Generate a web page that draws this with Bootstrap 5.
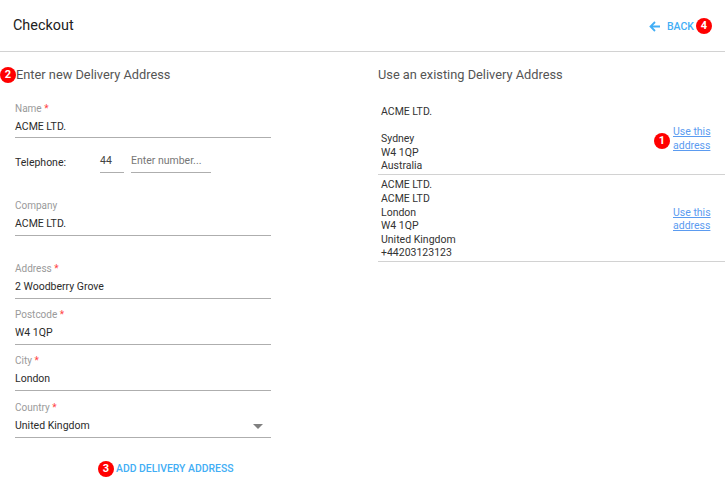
<!DOCTYPE html>
<html lang="en">
<head>
<meta charset="utf-8">
<title>Checkout</title>
<link href="https://cdn.jsdelivr.net/npm/bootstrap@5.3.0/dist/css/bootstrap.min.css" rel="stylesheet">
<style>
html,body{height:490px;overflow:hidden;background:#fff}
body{font-family:Roboto,"Liberation Sans",sans-serif;font-size:10.5px;color:#2b2b2b}
.top-bar{height:52px;border-bottom:1px solid #d2d2d2;padding:0 13px}
.page-title{font-size:14.4px;font-weight:400;color:#212121;margin:0;padding-top:1px}
.back-link{color:#42aef5;font-size:10.5px;font-weight:500;text-decoration:none}
.back-link svg{margin:1px 7px 0 0}
.back-text{padding-top:2px;margin-right:2px}
.num-dot{width:16px;height:16px;border-radius:50%;background:#f00;color:#fff;font-size:11px;font-weight:700;line-height:16px;text-align:center;flex:none;display:inline-block}
.body-cols{display:grid;grid-template-columns:378px 347px}
.sect-title{font-size:12.8px;font-weight:400;color:#555;line-height:16px;margin:0}
.left-pane{padding-top:15px}
.right-pane{padding-top:15px}
.left-title{display:flex;align-items:center}
.form-pane{width:256px;margin:20px 0 0 15px}
.field{border-bottom:1px solid #aeaeae;height:36px}
.field.first-field{height:35px}
.field+.field{margin-top:10.2px}
.field-lbl{display:block;font-size:10px;line-height:12px;color:#9a9a9a}
.field-lbl i{color:#f44;font-style:normal}
.field-val{display:block;line-height:14px;color:#2b2b2b;margin-top:5px}
.tel-row{display:flex;margin-top:9px;height:26px;margin-bottom:27px}
.tel-lbl{width:85px;padding-top:9px;line-height:13px}
.tel-a,.tel-b{border-bottom:1px solid #aeaeae;height:26px;padding-top:7px;line-height:13px}
.tel-a{width:24px;margin-right:7px;color:#444}
.tel-b{width:80px;color:#777}
.mt-gap{margin-top:27px!important}
.pick-arrow{width:0;height:0;border-left:5px solid transparent;border-right:5px solid transparent;border-top:5px solid #808080;margin-right:8px;margin-top:2px}
.add-row{margin-top:23.5px;padding-left:83px;color:#42aef5;font-weight:500;font-size:10.4px;line-height:16px;gap:2px;white-space:nowrap}
.addr-list{margin-top:18.5px;width:347px;line-height:13.6px;color:#333}
.addr-item{border-bottom:1px solid #d2d2d2;padding:3.5px 15px 1px 3px;display:flex;justify-content:space-between;align-items:center}
.addr-item a{color:#5b9bf0;display:block;width:37px;white-space:nowrap}
.dot-low{margin-top:4px;margin-right:-1px}
</style>
</head>
<body>
<header class="top-bar d-flex align-items-center justify-content-between">
  <h1 class="page-title">Checkout</h1>
  <a class="back-link d-flex align-items-center" href="#">
    <svg width="11" height="11" viewBox="0 0 11 11" fill="none" stroke="#42aef5" stroke-width="1.8"><path d="M11 5.5H1.5M6 1 1.5 5.5 6 10"/></svg><span class="back-text">BACK</span><span class="num-dot">4</span>
  </a>
</header>
<main class="body-cols">
  <section class="left-pane">
    <h2 class="sect-title left-title"><span class="num-dot">2</span>Enter new Delivery Address</h2>
    <form class="form-pane">
      <div class="field first-field"><span class="field-lbl">Name <i>*</i></span><span class="field-val">ACME LTD.</span></div>
      <div class="tel-row"><span class="tel-lbl">Telephone:</span><span class="tel-a">44</span><span class="tel-b">Enter number...</span></div>
      <div class="field"><span class="field-lbl">Company</span><span class="field-val">ACME LTD.</span></div>
      <div class="field mt-gap"><span class="field-lbl">Address <i>*</i></span><span class="field-val">2 Woodberry Grove</span></div>
      <div class="field"><span class="field-lbl">Postcode <i>*</i></span><span class="field-val">W4 1QP</span></div>
      <div class="field"><span class="field-lbl">City <i>*</i></span><span class="field-val">London</span></div>
      <div class="field"><span class="field-lbl">Country <i>*</i></span><span class="field-val d-flex justify-content-between align-items-center">United Kingdom<span class="pick-arrow"></span></span></div>
      <div class="add-row d-flex align-items-center"><span class="num-dot">3</span>ADD DELIVERY ADDRESS</div>
    </form>
  </section>
  <section class="right-pane">
    <h2 class="sect-title">Use an existing Delivery Address</h2>
    <div class="addr-list">
      <div class="addr-item">
        <div>ACME LTD.<br><br>Sydney<br>W4 1QP<br>Australia</div>
        <div class="d-flex align-items-center gap-1"><span class="num-dot dot-low">1</span><a href="#">Use this<br>address</a></div>
      </div>
      <div class="addr-item">
        <div>ACME LTD.<br>ACME LTD<br>London<br>W4 1QP<br>United Kingdom<br>+44203123123</div>
        <a href="#">Use this<br>address</a>
      </div>
    </div>
  </section>
</main>
<script src="https://cdn.jsdelivr.net/npm/bootstrap@5.3.0/dist/js/bootstrap.bundle.min.js"></script>
</body>
</html>
